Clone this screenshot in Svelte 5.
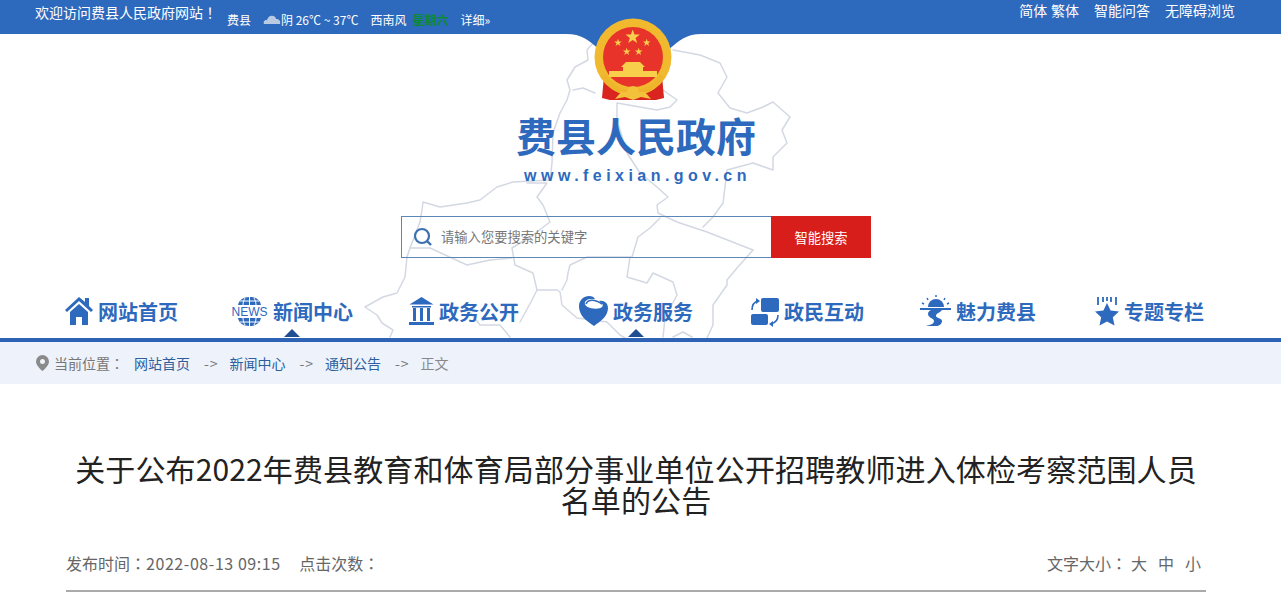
<script>
  const weather = { city: '费县', sky: '阴', temp: '26℃ ~ 37℃', wind: '西南风', day: '星期六' };
  const crumbs = ['网站首页', '新闻中心', '通知公告'];
  const nav = [
    { id: 'home', label: '网站首页', w: 28 },
    { id: 'news', label: '新闻中心', w: 37, active: true },
    { id: 'gov', label: '政务公开', w: 25 },
    { id: 'service', label: '政务服务', w: 29, active: true },
    { id: 'talk', label: '政民互动', w: 29 },
    { id: 'charm', label: '魅力费县', w: 31 },
    { id: 'topic', label: '专题专栏', w: 24 }
  ];
  const smallStars = [[25, 24.7], [53.7, 24.7], [33.7, 33.7], [45.7, 33.7]];
  const star = 'M0-5 1.200-1.600 4.800-1.600 1.900.6 3 4 0 2 -3 4 -1.900.6 -4.800-1.600 -1.200-1.600z';
</script>

<div class="page">
  <div class="topbar">
    <span class="welcome">欢迎访问费县人民政府网站<span class="tc">！</span></span>
    <div class="weather">
      <span class="city">{weather.city}</span>
      <svg class="cloud" width="18" height="11" viewBox="0 0 18 11">
        <path d="M1 10c-1-2 0-4 3-4 1-3 3-5 6-4 2 0 3 2 3 3 3 0 5 2 4 5z" fill="#b9cbe2" />
      </svg>
      <span class="sky">{weather.sky} {weather.temp}</span>
      <span class="wind">{weather.wind}</span>
      <span class="day">{weather.day}</span>
      <span class="more">详细»</span>
    </div>
    <div class="tools">
      <span class="lang">简体 繁体</span>
      <span>智能问答</span>
      <span>无障碍浏览</span>
    </div>
  </div>

  <header class="head">
    <svg class="map" width="1281" height="304" viewBox="0 34 1281 304">
      <g fill="none" stroke="#d3d8e2" stroke-width="1.500" stroke-linejoin="round" stroke-linecap="round">
        <path d="M593 43L587 50 588 60 575 67 567 80 570 90 567 100 560 113 553 133 552 163 550 180 513 182 497 187 480 200 467 203 440 207 423 202 422 210 420 222 410 248 407 257 405 277 397 293 383 297 365 307 377 315 382 323 393 330 390 337" />
        <path d="M673 50L700 55 720 63 727 77 718 93 730 108 747 113 763 107 773 102 790 117 782 130 787 143 773 157 773 170 753 163 727 170 725 187 723 203 713 217 703 227" />
        <path d="M753 250L737 268 727 280 727 285 713 305 713 325 707 338" />
        <path d="M573 90L583 88 595 93" />
        <path d="M663 90L677 100 670 107 657 110 617 103 617 120 627 153 640 173 657 187 668 197 657 205 658 213 677 222 707 232 753 250" />
        <path d="M527 183L547 183 537 197 543 205 550 222 533 235 512 248 515 265 533 273 537 290 557 290 560 292 562 305 577 318 607 322 620 335 625 338" />
        <path d="M410 248L430 248 467 265 490 260 512 258" />
        <path d="M660 218L650 228 638 237 632 257 587 257 570 265 568 273 567 280 562 290" />
        <path d="M630 257L627 277 647 283 653 273 673 282 677 295 665 318 663 337" />
        <path d="M673 337L683 332 692 337" />
        <path d="M510 337L500 325 480 325 470 312M520 322L532 300 537 290" />
      </g>
    </svg>
    <svg class="notch" width="136" height="16" viewBox="0 0 136 16">
      <path d="M0 0c16 0 22 6 34 16h68C114 6 120 0 136 0z" fill="#2d69bd" />
    </svg>
    <svg class="emblem" width="80" height="86" viewBox="0 0 80 86">
      <path d="M11 58h58l2 22-8 2H17l-8-2z" fill="#d9241f" />
      <circle cx="40" cy="39" r="38.500" fill="#f0b92e" />
      <circle cx="40" cy="39" r="30" fill="#e8332a" />
      <path d={star} transform="translate(39.700 19) scale(1.500)" fill="#f8cf4a" />
      {#each smallStars as [x, y]}
        <path d={star} transform="translate({x} {y}) scale(.8)" fill="#f8cf4a" />
      {/each}
      <path d="M33 44h14l5 5H28zM30 49h20v4H30zM16 53h48v6H16z" fill="#f8cf4a" />
      <path d="M12 56c8 12 16 16 28 16s20-4 28-16l3 3c-7 13-17 18-31 18S16 72 9 59z" fill="#eeb52c" />
      <path d="M22 81l6-7h24l6 7-10-2-8 3-8-3z" fill="#f3c13a" />
      <circle cx="40" cy="74" r="6" fill="#f3c13a" />
    </svg>

    <div class="brand">
      <h1>费县人民政府</h1>
      <p>www.feixian.gov.cn</p>
    </div>

    <div class="search">
      <div class="field">
        <svg width="20" height="20" viewBox="0 0 20 20">
          <circle cx="9" cy="9" r="7" fill="none" stroke="#3c70b0" stroke-width="2.200" />
          <path d="M14 14l4 4" stroke="#3c70b0" stroke-width="2.400" />
        </svg>
        <span>请输入您要搜索的关键字</span>
      </div>
      <div class="go">智能搜索</div>
    </div>

    <nav>
      {#each nav as item}
        <div class="item" class:active={item.active}>
          <svg width={item.w} height="32" viewBox="0 0 {item.w} 32">
            {#if item.id === 'home'}
              <path d="M0 15L14 2l6 5V3h4v8l4 4-2 2L14 6 2 17z" fill="#2d69bd" />
              <path d="M5 17l9-8 9 8v13h-6v-8h-6v8H5z" fill="#2d69bd" />
            {:else if item.id === 'news'}
              <g fill="#2d69bd">
                <path d="M7 10C8 5 12 2 18.500 2S29 5 30 10z" />
                <path d="M7 23h23c-1 5-5 8-11.500 8S8 28 7 23z" />
              </g>
              <g fill="none" stroke="#fff" stroke-width="1">
                <path d="M18.500 2v8M18.500 23v8M14 3c-1 2-2 4-2 7M23 3c1 2 2 4 2 7M14 30c-1-2-2-4-2-7M23 30c1-2 2-4 2-7M9 6h19M9 27h19" />
              </g>
              <text x="18.500" y="21" text-anchor="middle" class="newsword">NEWS</text>
            {:else if item.id === 'gov'}
              <path d="M12.500 2l12 7.500H.5z" fill="#2d69bd" />
              <path d="M3 11h19v1.500H3zM4 13h3v13H4zM11 13h3v13h-3zM18 13h3v13h-3z" fill="#2d69bd" />
              <path d="M0 27h25v3H0z" fill="#2d69bd" />
            {:else if item.id === 'service'}
              <path d="M15 31C6 25 0 20 0 11 0 5 5 1 10 1c3 0 5 1 6 3-3 0-8-1-10 3-1 3 2 5 5 6 5 1 10 1 12-1 2-2 0-4-3-6 5-1 9 2 9 7 0 8-7 13-14 18z" fill="#2d69bd" />
              <path d="M7 9c2-5 9-5 16 0" fill="none" stroke="#2d69bd" stroke-width="1.600" />
            {:else if item.id === 'talk'}
              <rect x="11" y="3" width="18" height="14" rx="2" fill="#2d69bd" />
              <rect x="1" y="19" width="17" height="11" rx="2" fill="#2d69bd" />
              <path d="M2 15c0-5 2-8 6-9M28 20c0 5-3 8-7 9" fill="none" stroke="#2d69bd" stroke-width="1.600" />
              <path d="M6 3l4 3-4 3zM23 26l-4 3 4 3z" fill="#2d69bd" />
            {:else if item.id === 'charm'}
              <path d="M8 12a8 8 0 0 1 16 0z" fill="#2d69bd" />
              <path d="M0 13h31v2H22c-2 3-6 3-6 6 0 2 6 2 6 5 0 3-3 5-6 5H6c4-1 8-2 8-5 0-3-6-3-6-7 0-2 1-3 3-4H0z" fill="#2d69bd" />
              <path d="M16 0v2M7 3l1 2M25 3l-1 2M2 8l2 1M29 8l-2 1" stroke="#2d69bd" stroke-width="1.400" />
            {:else}
              <path d="M12 8l3.600 7.600 8.400 1-6.200 5.700 1.700 8.300L12 26.400l-7.500 4.200 1.700-8.300L0 16.600l8.400-1z" fill="#2d69bd" />
              <path d="M3 2v8M8 2v5M12 2v4M16 2v5M21 2v8" stroke="#2d69bd" stroke-width="1.800" />
            {/if}
          </svg>
          <span>{item.label}</span>
          {#if item.active}<i class="tri"></i>{/if}
        </div>
      {/each}
    </nav>
  </header>

  <div class="crumbs">
    <div class="wrap">
      <svg width="13" height="16" viewBox="0 0 13 16">
        <path fill-rule="evenodd" d="M6.500 0a6.500 6.500 0 0 1 6.500 6.500C13 10 9 14 6.500 16 4 14 0 10 0 6.500A6.500 6.500 0 0 1 6.500 0zm0 4a2.500 2.500 0 1 0 0 5 2.500 2.500 0 0 0 0-5z" fill="#8a8a8a" />
      </svg>
      <span class="here">当前位置<span class="tc">：</span></span>
      {#each crumbs as c}
        <span class="link">{c}</span>
        <span class="arrow">-&gt;</span>
      {/each}
      <span class="last">正文</span>
    </div>
  </div>

  <main>
    <h2>关于公布2022年费县教育和体育局部分事业单位公开招聘教师进入体检考察范围人员名单的公告</h2>
    <div class="meta">
      <div>
        <span>发布时间<span class="tc">：</span><span class="stamp">2022-08-13 09:15</span></span>
        <span class="hits">点击次数<span class="tc">：</span></span>
      </div>
      <div class="size">
        <span class="sizelabel">文字大小<span class="tc">：</span></span>
        <span>大</span>
        <span>中</span>
        <span>小</span>
      </div>
    </div>
  </main>
</div>

<style>
  :global(body) {
    margin: 0;
    background: #fff;
    overflow: hidden;
  }

  .page {
    font-family: "Noto Sans CJK SC", "Liberation Sans", sans-serif;
    color: #666;
  }

  /* centred full-width punctuation */
  .tc {
    font-family: "Noto Sans CJK TC", sans-serif;
  }

  .topbar {
    height: 34px;
    background: #2d69bd;
    color: #fff;
    display: flex;
    padding-left: 35px;
    box-sizing: border-box;
  }

  .welcome {
    font-size: 14px;
    line-height: 24px;
  }

  .weather {
    display: flex;
    font-size: 12px;
    line-height: 40px;
    height: 34px;
    margin-left: 10px;
    flex: 1;
  }

  .cloud {
    margin: 14px 0 0 12px;
  }

  .wind {
    margin-left: 12px;
  }

  .day {
    margin-left: 6px;
    color: #0c8a2e;
    font-weight: 700;
  }

  .more {
    margin-left: 12px;
  }

  .tools {
    display: flex;
    gap: 15px;
    font-size: 14px;
    line-height: 21px;
    margin-right: 46px;
  }

  .lang {
    word-spacing: 0.5px;
  }

  .head {
    position: relative;
    height: 308px;
    padding-top: 77px;
    box-sizing: border-box;
    border-bottom: 4px solid #2d62b5;
  }

  .map {
    position: absolute;
    left: 0;
    top: 0;
  }

  .notch {
    position: absolute;
    left: 566px;
    top: 0;
  }

  .emblem {
    position: absolute;
    left: 593px;
    top: -16px;
  }

  .brand {
    position: relative;
    width: 300px;
    margin-left: 486px;
    text-align: center;
  }

  h1 {
    margin: 0;
    font-size: 40px;
    line-height: 48px;
    font-weight: 700;
    color: #2d69bd;
  }

  .brand p {
    margin: 7px 0 0;
    padding-left: 3px;
    font-family: "Liberation Sans", sans-serif;
    font-size: 16px;
    line-height: 20px;
    font-weight: 700;
    letter-spacing: 4.45px;
    color: #2d69bd;
  }

  .search {
    position: relative;
    display: flex;
    width: 470px;
    height: 42px;
    margin: 30px 0 0 401px;
  }

  .field {
    flex: 1;
    display: flex;
    align-items: center;
    gap: 8px;
    padding-left: 11px;
    border: 1px solid #5b86b8;
    border-right: 0;
    font-size: 13.3px;
    color: #777;
  }

  .field span {
    padding-bottom: 1px;
  }

  .go {
    width: 100px;
    background: #d81e1a;
    color: #fff;
    font-size: 13.3px;
    text-align: center;
    line-height: 44px;
  }

  nav {
    position: relative;
    display: flex;
    width: 1140px;
    margin: 37px 0 0 65px;
  }

  .item {
    position: relative;
    display: flex;
    align-items: center;
    gap: 5px;
    height: 32px;
    font-size: 20px;
    font-weight: 700;
    color: #2d69bd;
  }

  .item:nth-child(2) { margin-left: 53px; }
  .item:nth-child(3) { margin-left: 56px; }
  .item:nth-child(4) { margin-left: 60px; }
  .item:nth-child(5) { margin-left: 57px; }
  .item:nth-child(6) { margin-left: 56px; }
  .item:nth-child(7) { margin-left: 59px; }

  .newsword {
    font-family: "Liberation Sans", sans-serif;
    font-size: 12px;
    font-weight: 400;
    fill: #2d69bd;
  }

  .tri {
    position: absolute;
    left: 50%;
    bottom: -10px;
    margin-left: -8px;
    border: 8px solid transparent;
    border-top: 0;
    border-bottom-color: #1f4e93;
  }

  .crumbs {
    height: 42px;
    background: #edf2fb;
  }

  .wrap {
    display: flex;
    align-items: center;
    height: 42px;
    margin-left: 36px;
    font-size: 14px;
    color: #777;
  }

  .here {
    margin-left: 5px;
  }

  .link {
    margin-left: 10px;
    color: #2d5f9e;
  }

  .arrow {
    margin-left: 14px;
    letter-spacing: 1px;
    width: 15.5px;
  }

  .last {
    margin-left: 10px;
    color: #888;
  }

  main {
    width: 1140px;
    margin-left: 66px;
  }

  h2 {
    margin: 69px 0 0;
    font-size: 30px;
    line-height: 31px;
    font-weight: 400;
    letter-spacing: 0.13px;
    text-align: center;
    color: #222;
  }

  .meta {
    display: flex;
    justify-content: space-between;
    align-items: center;
    height: 54px;
    margin-top: 21px;
    padding-right: 5px;
    border-bottom: 2px solid #aaa;
    font-size: 16px;
  }

  .stamp {
    letter-spacing: 0.56px;
  }

  .hits {
    margin-left: 15px;
  }

  .size {
    display: flex;
    gap: 11px;
  }

  .sizelabel {
    margin-right: -7px;
  }
</style>
